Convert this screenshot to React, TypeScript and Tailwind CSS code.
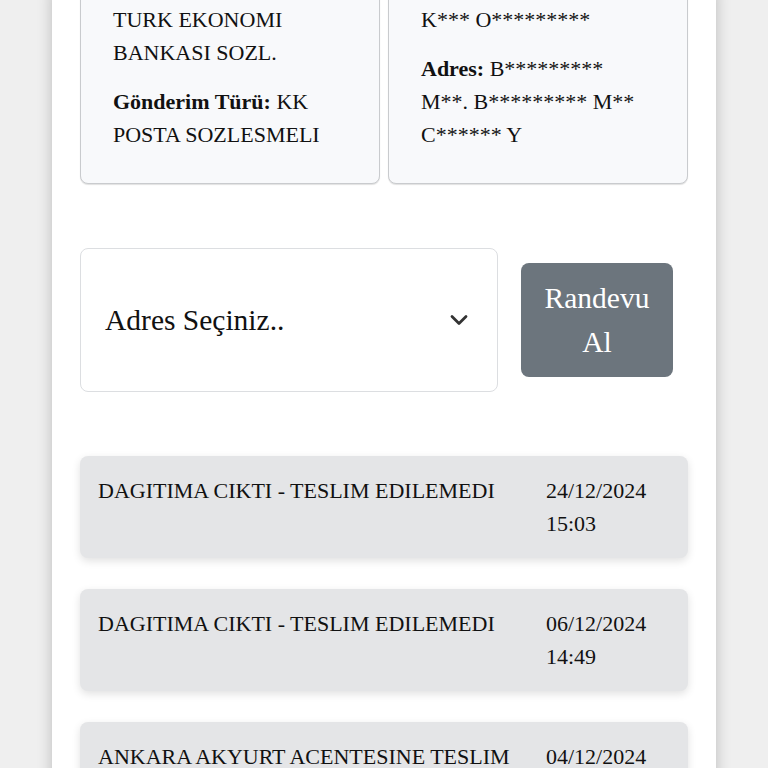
import { ChevronDown } from "lucide-react"

const events = [
  { title: "DAGITIMA CIKTI - TESLIM EDILEMEDI", date: "24/12/2024", time: "15:03" },
  { title: "DAGITIMA CIKTI - TESLIM EDILEMEDI", date: "06/12/2024", time: "14:49" },
  { title: "ANKARA AKYURT ACENTESINE TESLIM EDILDI", date: "04/12/2024", time: "10:12" },
]

const InfoCard = ({ children }: { children: React.ReactNode }) => (
  <div className="flex flex-col gap-4 rounded-lg border border-[#c9cbce] bg-[#f8f9fb] px-8 pb-8 pt-[12px] shadow-[0_1px_1px_rgba(0,0,0,0.12)]">
    {children}
  </div>
)

export default function App() {
  return (
    <div className="h-[768px] overflow-hidden bg-[#efefef] font-['Times_New_Roman','Liberation_Serif',serif] text-[#111]">
      <div className="mx-[52px] min-h-full bg-white px-[28px] shadow-[0_0_14px_rgba(0,0,0,0.22)]">
        <div className="-mt-[10px] grid grid-cols-2 gap-2 text-[22px] leading-[33px]">
          <InfoCard>
            <p>TURK EKONOMI BANKASI SOZL.</p>
            <p>
              <b>Gönderim Türü:</b> KK POSTA SOZLESMELI
            </p>
          </InfoCard>
          <InfoCard>
            <p>K*** O*********</p>
            <p>
              <b>Adres:</b> B********* M**. B********* M** C****** Y
            </p>
          </InfoCard>
        </div>

        <div className="mt-16 flex items-center gap-[23px]">
          <div className="flex h-[144px] w-[418px] items-center justify-between rounded-lg border border-[#dcdee1] bg-white px-[24px] text-[29.5px] leading-[44px]">
            <span>Adres Seçiniz..</span>
            <ChevronDown size={28} strokeWidth={2.4} className="text-[#333]" />
          </div>
          <button className="w-[152px] rounded-lg bg-[#6c757d] py-[13px] text-center font-['Times_New_Roman','Liberation_Serif',serif] text-[29.5px] leading-[44px] text-white">
            Randevu
            <br />
            Al
          </button>
        </div>

        <div className="mt-16 flex flex-col gap-[31px]">
          {events.map((e, i) => (
            <div
              key={i}
              className="flex gap-[24px] rounded-lg bg-[#e4e5e7] p-[18px] text-[22px] leading-[33px] shadow-[0_3px_8px_rgba(0,0,0,0.12)]"
            >
              <div className="flex-1">{e.title}</div>
              <div className="w-[124px]">
                {e.date}
                <br />
                {e.time}
              </div>
            </div>
          ))}
        </div>
      </div>
    </div>
  )
}
